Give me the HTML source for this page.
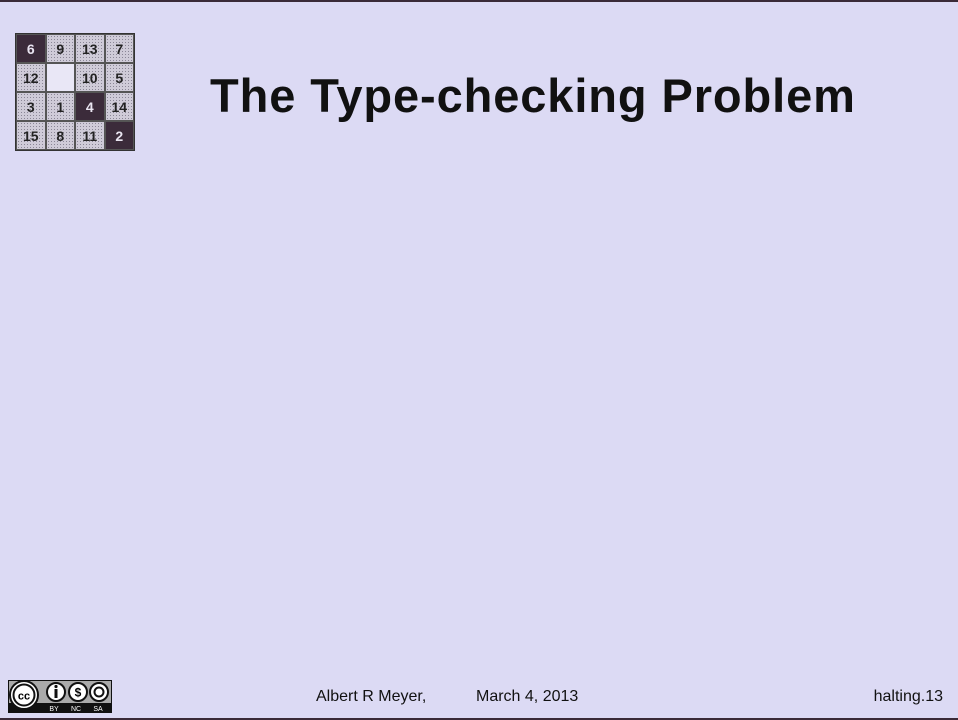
<!DOCTYPE html>
<html><head><meta charset="utf-8"><style>
html,body{margin:0;padding:0}
body{width:958px;height:720px;background:#dcdaf4;position:relative;overflow:hidden;font-family:"Liberation Sans",sans-serif}
.top{position:absolute;left:0;top:0;width:958px;height:2px;background:#3a2a38}
.bot{position:absolute;left:0;top:718px;width:958px;height:2px;background:#3a2a38}
.grid{position:absolute;left:15px;top:33px;width:120px;height:118px;background:#555;display:grid;grid-template-columns:repeat(4,1fr);grid-template-rows:repeat(4,1fr);gap:2px;border:1px solid #333;box-sizing:border-box;padding:1px}
.grid div{display:flex;align-items:center;justify-content:center;font-weight:bold;font-size:14px;color:#222;
background-color:#cfcbd8;background-image:radial-gradient(#8a8696 0.6px,transparent 0.7px);background-size:3px 3px}
.grid div.d{background:#3b2b3a;color:#e8e4f0}
.grid div.w{background:#e9e7f6}
.title{position:absolute;left:210px;top:68px;font-size:47px;font-weight:bold;color:#111;white-space:nowrap;letter-spacing:0.9px}
.f{position:absolute;top:688px;font-size:16px;color:#111;white-space:nowrap}
</style></head><body>
<div class="top"></div><div class="bot"></div>
<div class="grid">
<div class="d">6</div><div>9</div><div>13</div><div>7</div>
<div>12</div><div class="w"></div><div>10</div><div>5</div>
<div>3</div><div>1</div><div class="d">4</div><div>14</div>
<div>15</div><div>8</div><div>11</div><div class="d">2</div>
</div>
<div class="title">The Type-checking Problem</div>
<svg style="position:absolute;left:8px;top:680px" width="104" height="33" viewBox="0 0 104 33">
<rect x="0.5" y="0.5" width="103" height="32" fill="#aaa" stroke="#111"/>
<rect x="1" y="23" width="102" height="9" fill="#111"/>
<circle cx="16" cy="15" r="14" fill="#fff" stroke="#111" stroke-width="2"/>
<circle cx="16" cy="15" r="10.5" fill="#fff" stroke="#111" stroke-width="2"/>
<text x="16" y="19.5" font-size="11" font-weight="bold" text-anchor="middle" font-family="Liberation Sans">cc</text>
<circle cx="48" cy="12" r="9" fill="#fff" stroke="#111" stroke-width="2"/>
<rect x="46.5" y="9" width="3" height="9" fill="#111"/><circle cx="48" cy="6.5" r="1.6" fill="#111"/>
<circle cx="70" cy="12" r="9" fill="#fff" stroke="#111" stroke-width="2"/>
<text x="70" y="16.5" font-size="12" font-weight="bold" text-anchor="middle" font-family="Liberation Sans">$</text>
<circle cx="91" cy="12" r="9" fill="#fff" stroke="#111" stroke-width="2"/>
<circle cx="91" cy="12" r="4.5" fill="none" stroke="#111" stroke-width="2"/>
<text x="46" y="31" font-size="7" fill="#fff" text-anchor="middle" font-family="Liberation Sans">BY</text>
<text x="68" y="31" font-size="7" fill="#fff" text-anchor="middle" font-family="Liberation Sans">NC</text>
<text x="90" y="31" font-size="7" fill="#fff" text-anchor="middle" font-family="Liberation Sans">SA</text>
</svg>
<div class="f" style="left:316px">Albert R Meyer,</div>
<div class="f" style="left:476px">March 4, 2013</div>
<div class="f" style="right:15px">halting.13</div>
</body></html>
